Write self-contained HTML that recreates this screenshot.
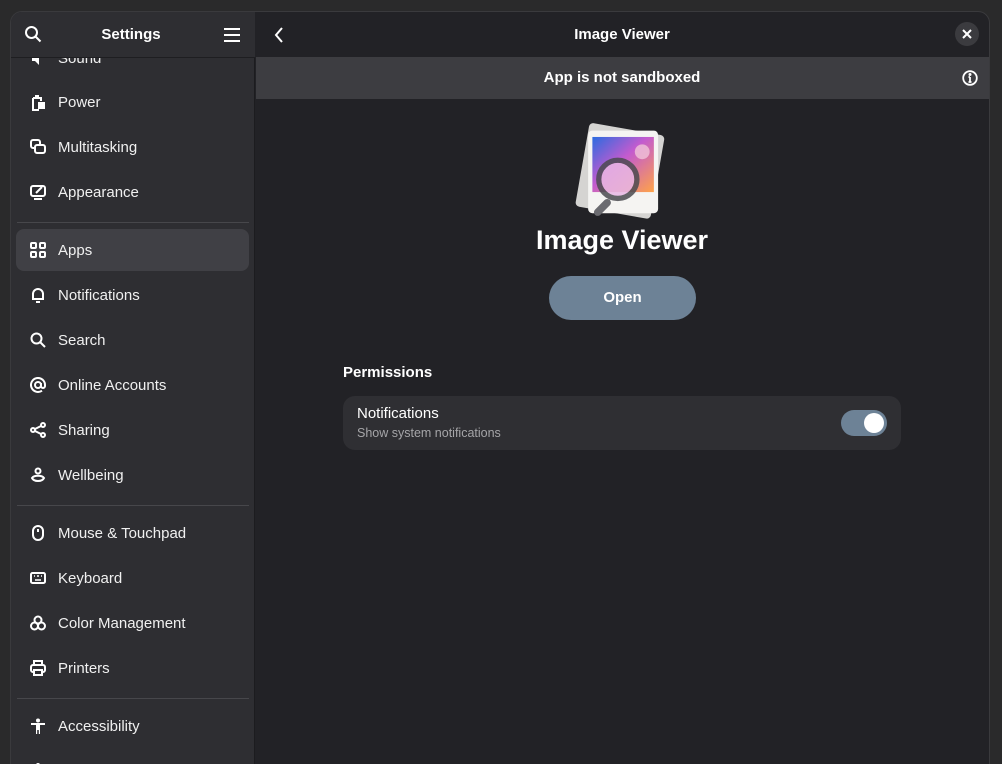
<!DOCTYPE html>
<html><head><meta charset="utf-8"><style>
*{margin:0;padding:0;box-sizing:border-box}
html,body{width:1002px;height:764px;overflow:hidden}
body{background:#2a2a2b;font-family:"Liberation Sans",sans-serif;color:#fff;position:relative}
.win{position:absolute;left:10px;top:11px;width:980px;height:770px;border-radius:12px;overflow:hidden;background:#222226;border:1px solid #3a3a3d}
.side{position:absolute;left:0;top:0;width:244px;height:100%;background:#2e2e32;border-right:1px solid #1c1c1f}
.shead{position:absolute;left:0;top:0;width:244px;height:46px;background:#2e2e32;border-bottom:1px solid #1e1e21;z-index:2}
.t{position:absolute;font-weight:bold;font-size:15px;transform:translateX(-50%)}
.item{position:absolute;left:5px;width:233px;height:42px;border-radius:8px;font-size:15px;color:#f0f0f0}
.item span{position:absolute;left:42px;top:13px}
.item svg{position:absolute;left:14px;top:13px}
.sep{position:absolute;left:6px;width:232px;height:1px;background:#47474b}
.sel{background:#404045}
.main{position:absolute;left:245px;top:0;right:0;height:100%}
</style></head><body>
<div class="win">
<div class="side">
 <div class="shead">
  <svg style="position:absolute;left:13px;top:13px" width="18" height="18" viewBox="0 0 18 18" fill="none" stroke="#fff" stroke-width="2"><circle cx="7.5" cy="7.5" r="5.5"/><path d="M11.5 11.5l5 5"/></svg>
  <div class="t" style="left:120px;top:14px">Settings</div>
  <svg style="position:absolute;left:213px;top:16px" width="16" height="14" viewBox="0 0 16 14" stroke="#fff" stroke-width="2"><path d="M0 1h16M0 7h16M0 13h16"/></svg>
 </div>
 <div class="item" style="top:25px"><svg width="16" height="16" viewBox="0 0 16 16" fill="#fff"><path d="M2 5h3l4-4v14l-4-4H2z"/></svg><span>Sound</span></div>
 <div class="item" style="top:69px"><svg width="16" height="18" viewBox="0 0 16 18" fill="none" stroke="#fff" stroke-width="2"><path d="M5 2h4M3 4h8v3M9 16H3V4"/><path d="M9 9h5v5H9z" fill="#fff"/></svg><span>Power</span></div>
 <div class="item" style="top:114px"><svg width="16" height="16" viewBox="0 0 16 16" fill="none" stroke="#fff" stroke-width="2"><rect x="1" y="1" width="9" height="8" rx="2"/><rect x="5" y="6" width="10" height="8" rx="2" fill="#2e2e32"/></svg><span>Multitasking</span></div>
 <div class="item" style="top:159px"><svg width="16" height="16" viewBox="0 0 16 16" fill="none" stroke="#fff" stroke-width="2"><rect x="1" y="2" width="14" height="10" rx="2"/><path d="M4 15h8"/><path d="M6 9l6-6" /></svg><span>Appearance</span></div>
 <div class="sep" style="top:210px"></div>
 <div class="item sel" style="top:217px"><svg width="16" height="16" viewBox="0 0 16 16" fill="none" stroke="#fff" stroke-width="2"><rect x="1" y="1" width="5" height="5" rx="1"/><rect x="10" y="1" width="5" height="5" rx="1"/><rect x="1" y="10" width="5" height="5" rx="1"/><rect x="10" y="10" width="5" height="5" rx="1"/></svg><span>Apps</span></div>
 <div class="item" style="top:262px"><svg width="16" height="16" viewBox="0 0 16 16" fill="none" stroke="#fff" stroke-width="2"><path d="M3 12V7a5 5 0 0110 0v5H2h12M6 15h4"/></svg><span>Notifications</span></div>
 <div class="item" style="top:307px"><svg width="16" height="16" viewBox="0 0 16 16" fill="none" stroke="#fff" stroke-width="2"><circle cx="6.5" cy="6.5" r="5"/><path d="M10 10l5 5"/></svg><span>Search</span></div>
 <div class="item" style="top:352px"><svg width="16" height="16" viewBox="0 0 16 16" fill="none" stroke="#fff" stroke-width="2"><circle cx="8" cy="8" r="3"/><path d="M11 6v3a2 2 0 004 0V8a7 7 0 10-3 5.7"/></svg><span>Online Accounts</span></div>
 <div class="item" style="top:397px"><svg width="16" height="16" viewBox="0 0 16 16" fill="none" stroke="#fff" stroke-width="2"><circle cx="3" cy="8" r="2"/><circle cx="13" cy="3" r="2"/><circle cx="13" cy="13" r="2"/><path d="M5 7l6-3M5 9l6 3"/></svg><span>Sharing</span></div>
 <div class="item" style="top:442px"><svg width="16" height="16" viewBox="0 0 16 16" fill="none" stroke="#fff" stroke-width="2"><circle cx="8" cy="4" r="2.5"/><path d="M2 11c2-3 10-3 12 0-2 4-10 4-12 0z"/></svg><span>Wellbeing</span></div>
 <div class="sep" style="top:493px"></div>
 <div class="item" style="top:500px"><svg width="16" height="16" viewBox="0 0 16 16" fill="none" stroke="#fff" stroke-width="2"><rect x="3" y="1" width="10" height="14" rx="5"/><path d="M8 4v3"/></svg><span>Mouse &amp; Touchpad</span></div>
 <div class="item" style="top:545px"><svg width="16" height="16" viewBox="0 0 16 16" fill="none" stroke="#fff" stroke-width="2"><rect x="1" y="3" width="14" height="10" rx="1.5"/><path d="M4 6h1M7 6h2M11 6h1M5 10h6" stroke-width="1.5"/></svg><span>Keyboard</span></div>
 <div class="item" style="top:590px"><svg width="16" height="16" viewBox="0 0 16 16" fill="none" stroke="#fff" stroke-width="2"><circle cx="8" cy="5" r="3.5"/><circle cx="4.5" cy="11" r="3.5"/><circle cx="11.5" cy="11" r="3.5"/></svg><span>Color Management</span></div>
 <div class="item" style="top:635px"><svg width="16" height="16" viewBox="0 0 16 16" fill="none" stroke="#fff" stroke-width="2"><rect x="4" y="1" width="8" height="4"/><rect x="1" y="5" width="14" height="7" rx="2"/><rect x="4" y="10" width="8" height="5" fill="#2e2e32"/></svg><span>Printers</span></div>
 <div class="sep" style="top:686px"></div>
 <div class="item" style="top:693px"><svg width="16" height="16" viewBox="0 0 16 16" fill="#fff"><circle cx="8" cy="2.5" r="2"/><path d="M1 5h14v2h-5v9H8.8v-4H7.2v4H6V7H1z"/></svg><span>Accessibility</span></div>
 <div class="item" style="top:738px"><svg width="16" height="16" viewBox="0 0 16 16" fill="#fff" style="top:12px"><circle cx="8" cy="3" r="2"/></svg><span style="top:22px">System</span></div>
</div>
<div class="main">
 <svg style="position:absolute;left:18px;top:15px" width="10" height="16" viewBox="0 0 10 16" fill="none" stroke="#fff" stroke-width="2"><path d="M8 1L2 8l6 7"/></svg>
 <div class="t" style="left:366px;top:14px">Image Viewer</div>
 <div style="position:absolute;left:699px;top:10px;width:24px;height:24px;border-radius:50%;background:#3b3b3f"></div>
 <svg style="position:absolute;left:706px;top:17px" width="10" height="10" viewBox="0 0 10 10" stroke="#fff" stroke-width="2"><path d="M1 1l8 8M9 1l-8 8"/></svg>
 <div style="position:absolute;left:0;top:45px;right:0;height:42px;background:#3d3d41"></div>
 <div class="t" style="left:366px;top:57px">App is not sandboxed</div>
 <svg style="position:absolute;left:706px;top:58px" width="16" height="16" viewBox="0 0 16 16" fill="none" stroke="#fff" stroke-width="1.8"><circle cx="8" cy="8" r="6.8"/><path d="M8 7v5M6.5 12h3M6.5 7H8"/><circle cx="8" cy="4.5" r="0.6" fill="#fff"/></svg>
 <svg style="position:absolute;left:312px;top:108px" width="106" height="106" viewBox="0 0 98 100">
  <rect x="12" y="8" width="72" height="80" rx="4" fill="#d5d4d2" transform="rotate(10 48 48)"/>
  <rect x="18" y="10" width="66" height="78" rx="4" fill="#f5f4f2"/>
  <defs><linearGradient id="g" x1="0" y1="0" x2="1" y2="1"><stop offset="0" stop-color="#2b6be0"/><stop offset="0.45" stop-color="#c35bcf"/><stop offset="1" stop-color="#ffa348"/></linearGradient></defs>
  <rect x="22" y="16" width="58" height="52" fill="url(#g)"/>
  <circle cx="69" cy="30" r="7" fill="#f0c4d8" opacity=".8"/>
  <path d="M36 78l-9 9" stroke="#6b6b70" stroke-width="7" stroke-linecap="round"/>
  <circle cx="46" cy="56" r="18" fill="#e9b8e4" opacity=".85" stroke="#4b4b50" stroke-width="5"/>
 </svg>
 <div class="t" style="left:366px;top:213px;font-size:27px">Image Viewer</div>
 <div style="position:absolute;left:293px;top:264px;width:147px;height:44px;border-radius:22px;background:#6d8296;font-weight:bold;font-size:15px;text-align:center;line-height:44px">Open</div>
 <div style="position:absolute;left:87px;top:352px;font-weight:bold;font-size:15px">Permissions</div>
 <div style="position:absolute;left:87px;top:384px;width:558px;height:54px;border-radius:12px;background:#2f2f33">
  <div style="position:absolute;left:14px;top:9px;font-size:15px">Notifications</div>
  <div style="position:absolute;left:14px;top:30px;font-size:12.5px;color:#a5a5a8">Show system notifications</div>
  <div style="position:absolute;left:498px;top:14px;width:46px;height:26px;border-radius:13px;background:#6d8296"><div style="position:absolute;right:3px;top:3px;width:20px;height:20px;border-radius:50%;background:#fff"></div></div>
 </div>
</div>
</div>
</body></html>
